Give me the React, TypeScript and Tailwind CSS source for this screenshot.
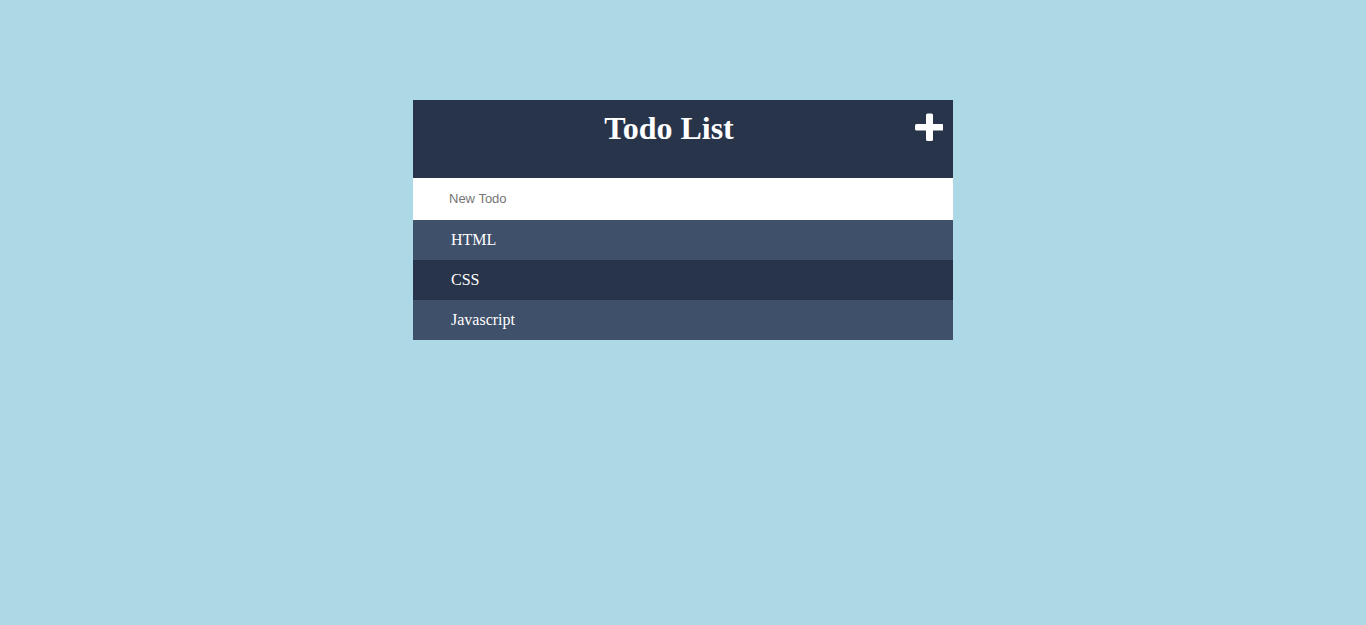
import React from "react";

const todos = ["HTML", "CSS", "Javascript"];

export default function App() {
  return (
    <div className="min-h-[625px] w-full bg-[#add8e6] pt-[100px]">
      <div className="mx-auto w-[540px]">
        {/* Header */}
        <div className="relative h-[78px] bg-[#283449]">
          <h1
            className="pt-[10px] pr-[28px] text-center text-[32px] font-bold leading-[37px] text-white"
            style={{ fontFamily: '"Liberation Serif", "Times New Roman", serif' }}
          >
            Todo List
          </h1>
          <svg
            className="absolute top-[13px] right-[10px]"
            width="28"
            height="28"
            viewBox="0 0 28 28"
          >
            <rect x="11" y="0.5" width="7" height="27.5" rx="1.5" fill="#fff" />
            <rect x="0" y="11" width="28.5" height="6.5" rx="1.5" fill="#fff" />
          </svg>
        </div>

        {/* Input */}
        <input
          type="text"
          placeholder="New Todo"
          className="block h-[42px] w-full bg-white pb-[2px] pl-[36px] text-[13px] text-[#333] outline-none placeholder:text-[#757575]"
          style={{ fontFamily: '"Liberation Sans", Arial, sans-serif' }}
        />

        {/* List */}
        <ul style={{ fontFamily: '"Liberation Serif", "Times New Roman", serif' }}>
          {todos.map((t, i) => (
            <li
              key={t}
              className={
                i % 2 === 0
                  ? "h-[40px] bg-[#3f506a] pl-[38px] text-[16px] leading-[40px] text-white"
                  : "h-[40px] bg-[#283449] pl-[38px] text-[16px] leading-[40px] text-white"
              }
            >
              {t}
            </li>
          ))}
        </ul>
      </div>
    </div>
  );
}
